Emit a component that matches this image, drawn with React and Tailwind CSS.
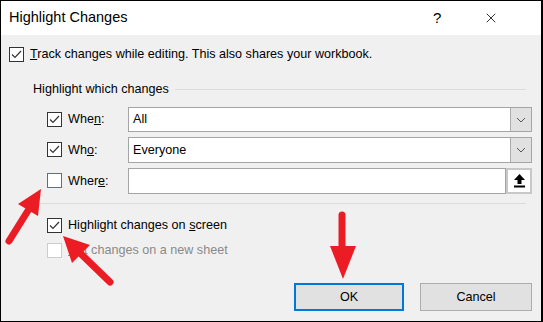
import { X } from 'lucide-react'

const font = { fontFamily: '"Liberation Sans", Arial, sans-serif' }

function Check({ checked, box = 'border-[#333333]' }) {
  return (
    <span className={`flex items-center justify-center w-[15px] h-[15px] shrink-0 border bg-white ${box}`}>
      {checked && (
        <svg width="11" height="9" viewBox="0 0 11 9">
          <polyline points="1,4.5 4,7.5 10,1" fill="none" stroke="#333" strokeWidth="1.2" />
        </svg>
      )}
    </span>
  )
}

function Chevron() {
  return (
    <svg width="10" height="6" viewBox="0 0 10 6">
      <polyline points="1,1 5,5 9,1" fill="none" stroke="#555" strokeWidth="1" />
    </svg>
  )
}

function Combo({ value, h }) {
  return (
    <div className={`flex flex-1 border border-[#a5a5a5] bg-white ${h}`}>
      <div className="flex-1 flex items-center pl-[4px] text-[12.6px] text-black">{value}</div>
      <div className="w-[21px] flex items-center justify-center bg-[#e1e1e1] border-l border-[#adadad]">
        <Chevron />
      </div>
    </div>
  )
}

function Row({ label, children, check, h }) {
  return (
    <div className={`flex items-center ${h}`}>
      <div className="w-[81px] flex items-center gap-[6px]">
        {check}
        <span className="text-[12.6px] text-black">{label}</span>
      </div>
      {children}
    </div>
  )
}

export default function App() {
  return (
    <div style={font} className="relative w-[543px] h-[322px] border border-black border-r-2 bg-[#f0f0f0] flex flex-col overflow-hidden">
      {/* Title bar */}
      <div className="h-[34px] bg-white flex items-center pl-[8px] shrink-0">
        <span className="text-[14.5px] text-black flex-1">Highlight Changes</span>
        <span className="text-[15px] text-black w-[10px] mr-[40px]">?</span>
        <X size={16} strokeWidth={1.2} className="text-black mr-[42px]" />
      </div>

      <div className="flex flex-col pl-[8px] pr-[9px]">
        <div className="flex items-center gap-[6px] mt-[12px] h-[15px]">
          <Check checked />
          <span className="text-[12.6px] text-black">
            <u>T</u>rack changes while editing. This also shares your workbook.
          </span>
        </div>

        <div className="flex flex-col pl-[24px]">
          <div className="flex items-center mt-[20px] h-[15px]">
            <span className="text-[12.6px] text-black">Highlight which changes</span>
            <div className="flex-1 ml-[6px] mr-[6px] h-px bg-[#dcdcdc]" />
          </div>

          <div className="flex flex-col pl-[14px]">
            <Row label={<>Whe<u>n</u>:</>} check={<Check checked />} h="h-[25px] mt-[10px]">
              <Combo value="All" h="h-[25px]" />
            </Row>
            <Row label={<>Wh<u>o</u>:</>} check={<Check checked />} h="h-[26px] mt-[5px]">
              <Combo value="Everyone" h="h-[26px]" />
            </Row>
            <Row
              label={<>Wher<u>e</u>:</>}
              check={<span className="w-[15px] h-[15px] shrink-0 bg-white border border-solid border-[#1e7fd4]" />}
              h="h-[26px] mt-[5px]"
            >
              <div className="flex flex-1 h-[26px]">
                <div className="flex-1 border border-[#a5a5a5] bg-white" />
                <div className="w-[26px] border-2 border-[#c8c8c8] bg-white flex items-center justify-center">
                  <svg width="11" height="14" viewBox="0 0 11 14">
                    <polygon points="5.5,0 11,6 7.5,6 7.5,10 3.5,10 3.5,6 0,6" fill="#000" />
                    <rect x="0" y="11.5" width="11" height="2" fill="#000" />
                  </svg>
                </div>
              </div>
            </Row>
          </div>

          <div className="h-px bg-[#dcdcdc] mt-[9px] ml-[7px] mr-[6px]" />

          <div className="flex flex-col pl-[14px]">
            <div className="flex items-center gap-[6px] mt-[14px] h-[15px]">
              <Check checked />
              <span className="text-[12.6px] text-black">
                Highlight changes on <u>s</u>creen
              </span>
            </div>
            <div className="flex items-center gap-[6px] mt-[10px] h-[15px]">
              <Check box="border-[#cccccc]" />
              <span className="text-[12.6px] text-[#8a8a8a]">
                <u>L</u>ist changes on a new sheet
              </span>
            </div>
          </div>
        </div>

        <div className="flex justify-end gap-[16px] mt-[25px]">
          <button className="w-[110px] h-[28px] border-2 border-[#0078d7] bg-[#e1e1e1] text-[12.6px] text-black">
            OK
          </button>
          <button className="w-[112px] h-[28px] border border-[#adadad] bg-[#e1e1e1] text-[12.6px] text-black">
            Cancel
          </button>
        </div>
      </div>

      {/* Red annotation arrows */}
      <svg className="absolute left-[-1px] top-[-1px] pointer-events-none" width="543" height="322" viewBox="0 0 543 322">
        <line x1="9" y1="241" x2="29" y2="209" stroke="#ec1c24" strokeWidth="7" strokeLinecap="round" />
        <polygon points="41,189 38,216 18,204" fill="#ec1c24" />
        <line x1="110" y1="282" x2="80" y2="253" stroke="#ec1c24" strokeWidth="7" strokeLinecap="round" />
        <polygon points="63,236 90,245 72,263" fill="#ec1c24" />
        <line x1="342" y1="215" x2="342" y2="250" stroke="#ec1c24" strokeWidth="7" strokeLinecap="round" />
        <polygon points="330,246 356,246 343,279" fill="#ec1c24" />
      </svg>
    </div>
  )
}
